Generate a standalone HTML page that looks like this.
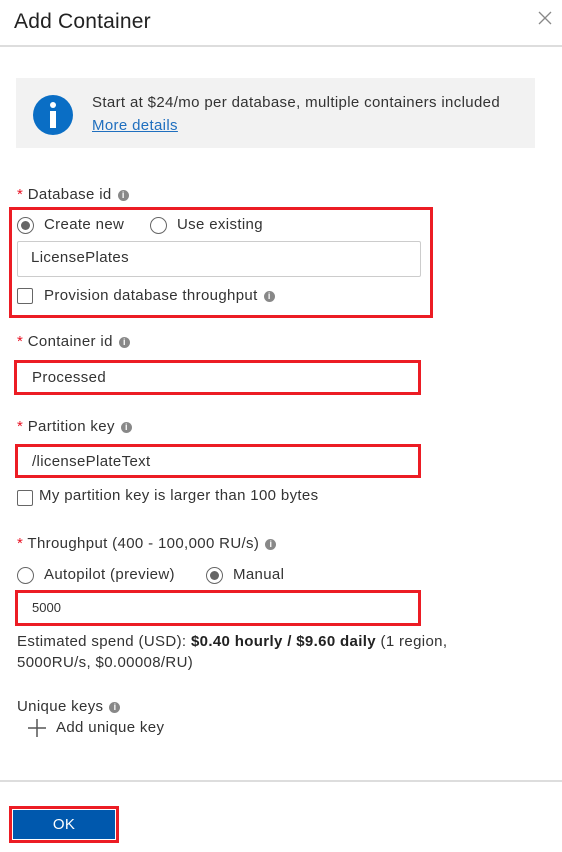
<!DOCTYPE html>
<html><head><style>
*{margin:0;padding:0;box-sizing:border-box}
body{width:562px;height:852px;background:#fff;position:relative;font-family:"Liberation Sans",sans-serif;font-size:15px;letter-spacing:0.35px;color:#333;overflow:hidden}
.a{position:absolute;white-space:nowrap}
.red{position:absolute;border:3px solid #ec1c24}
.st{color:#e81123}
.i{display:inline-block;width:11px;height:11px;border-radius:50%;background:#888;color:#fff;font-size:9px;font-weight:bold;text-align:center;line-height:11px;vertical-align:1px;margin-left:6px;letter-spacing:0}
.rad{position:absolute;width:17px;height:17px;border:1px solid #666;border-radius:50%}
.rad.on::after{content:"";position:absolute;left:3px;top:3px;width:9px;height:9px;border-radius:50%;background:#666}
.cb{position:absolute;width:16px;height:16px;border:1px solid #666;border-radius:2px}
</style></head><body>
<div class="a" style="left:14px;top:10px;font-size:21px;letter-spacing:0.2px;color:#222">Add Container</div>
<svg class="a" style="left:538px;top:11px" width="14" height="14"><path d="M1 1L13 13M13 1L1 13" stroke="#888" stroke-width="1.3"/></svg>
<div class="a" style="left:0;top:45px;width:562px;height:2px;background:#ddd"></div>
<div class="a" style="left:16px;top:78px;width:519px;height:70px;background:#f2f2f2"></div>
<div class="a" style="left:33px;top:95px;width:40px;height:40px;border-radius:50%;background:#0a6ec5"></div>
<div class="a" style="left:50px;top:102px;width:6px;height:6px;border-radius:50%;background:#fff"></div>
<div class="a" style="left:50px;top:111px;width:6px;height:17px;background:#fff"></div>
<div class="a" style="left:92px;top:94px">Start at $24/mo per database, multiple containers included</div>
<div class="a" style="left:92px;top:117px;color:#1f6fbf;text-decoration:underline">More details</div>

<div class="a" style="left:17px;top:186px"><span class="st">*</span> Database id<span class="i">i</span></div>
<div class="red" style="left:9px;top:207px;width:424px;height:111px"></div>
<div class="rad on" style="left:17px;top:217px"></div>
<div class="a" style="left:44px;top:216px">Create new</div>
<div class="rad" style="left:150px;top:217px"></div>
<div class="a" style="left:177px;top:216px">Use existing</div>
<div class="a" style="left:17px;top:241px;width:404px;height:36px;border:1px solid #ccc;border-radius:2px"></div>
<div class="a" style="left:31px;top:249px">LicensePlates</div>
<div class="cb" style="left:17px;top:288px"></div>
<div class="a" style="left:44px;top:287px">Provision database throughput<span class="i">i</span></div>

<div class="a" style="left:17px;top:333px"><span class="st">*</span> Container id<span class="i">i</span></div>
<div class="red" style="left:14px;top:360px;width:407px;height:35px"></div>
<div class="a" style="left:32px;top:369px">Processed</div>

<div class="a" style="left:17px;top:418px"><span class="st">*</span> Partition key<span class="i">i</span></div>
<div class="red" style="left:15px;top:444px;width:406px;height:34px"></div>
<div class="a" style="left:32px;top:453px">/licensePlateText</div>
<div class="cb" style="left:17px;top:490px"></div>
<div class="a" style="left:39px;top:487px">My partition key is larger than 100 bytes</div>

<div class="a" style="left:17px;top:535px"><span class="st">*</span> Throughput (400 - 100,000 RU/s)<span class="i">i</span></div>
<div class="rad" style="left:17px;top:567px"></div>
<div class="a" style="left:44px;top:566px">Autopilot (preview)</div>
<div class="rad on" style="left:206px;top:567px"></div>
<div class="a" style="left:233px;top:566px">Manual</div>
<div class="red" style="left:15px;top:590px;width:406px;height:36px"></div>
<div class="a" style="left:32px;top:600px;font-size:13px;letter-spacing:0">5000</div>
<div class="a" style="left:17px;top:633px">Estimated spend (USD): <b style="color:#222">$0.40 hourly / $9.60 daily</b> (1 region,</div>
<div class="a" style="left:17px;top:654px">5000RU/s, $0.00008/RU)</div>

<div class="a" style="left:17px;top:698px">Unique keys<span class="i">i</span></div>
<svg class="a" style="left:27px;top:718px" width="20" height="20"><path d="M10 1V19M1 10H19" stroke="#555" stroke-width="1.5"/></svg>
<div class="a" style="left:56px;top:719px">Add unique key</div>
<div class="a" style="left:0;top:780px;width:562px;height:2px;background:#ddd"></div>
<div class="red" style="left:9px;top:806px;width:110px;height:37px"></div>
<div class="a" style="left:13px;top:810px;width:102px;height:29px;background:#0058ad;color:#fff;text-align:center;line-height:29px;font-size:15px">OK</div>
</body></html>
